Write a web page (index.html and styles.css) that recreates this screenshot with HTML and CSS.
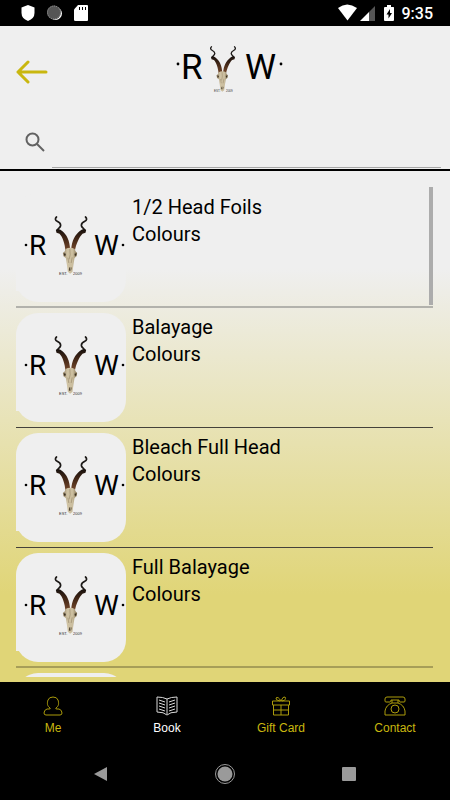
FILE: index.html
```html
<!DOCTYPE html>
<html lang="en">
<head>
<meta charset="utf-8">
<meta name="viewport" content="width=device-width, initial-scale=1">
<title>Book</title>
<link rel="stylesheet" href="styles.css">
</head>
<body>
<svg class="defs" aria-hidden="true">
  <defs>
    <linearGradient id="horn-shade" x1="0" y1="0" x2="0" y2="1">
      <stop offset="0" stop-color="#17110e"/>
      <stop offset="0.4" stop-color="#3e2415"/>
      <stop offset="1" stop-color="#75482a"/>
    </linearGradient>
    <linearGradient id="bone-shade" x1="0" y1="0" x2="1" y2="0">
      <stop offset="0" stop-color="#8d7c60"/>
      <stop offset="0.3" stop-color="#d0c3a4"/>
      <stop offset="0.7" stop-color="#cabd9e"/>
      <stop offset="1" stop-color="#80704f"/>
    </linearGradient>
    <symbol id="skull" viewBox="0 0 99 174">
      <g fill="none" stroke="#1c1917" stroke-width="5" stroke-linecap="round" stroke-linejoin="round">
        <path d="M6 3C1 7 2 13 8 16C14 19 20 23 18 30C17 35 11 36 9 42"/>
        <path d="M93 3C98 7 97 13 91 16C85 19 79 23 81 30C82 35 88 36 90 42"/>
      </g>
      <path fill="url(#horn-shade)" d="M4 42C8 37 16 39 23 45C37 56 45 73 47 101L33 104C31 83 25 63 15 53L6 50Z"/>
      <path fill="url(#horn-shade)" d="M95 42C91 37 83 39 76 45C62 56 52 73 50 101L61 104C65 83 74 63 84 53L93 50Z"/>
      <path fill="url(#bone-shade)" d="M33 99Q47 92 61 99L63 106L68 111L66 121L60 126L57 145L54 167L47 173L40 167L37 145L34 126L27 121L25 111L31 106Z"/>
      <path fill="#3b3022" d="M28 112L34 113L33 119L29 119ZM66 112L60 113L61 119L65 119ZM44 155L46 153V165L43 163ZM49 153L51 155L50 163L48 165Z"/>
      <path fill="none" stroke="#8b7a5c" stroke-width="1.5" d="M46 99L47 116L44 130M53 124L50 141M40 125L43 141"/>
    </symbol>
    <symbol id="tile-logo" viewBox="0 0 110 109">
      <rect width="110" height="109" rx="22" fill="#efefef"/>
      <rect y="70" width="8" height="28" fill="#efefef"/>
      <circle cx="10" cy="52" r="1.3"/>
      <text class="logo-letter" x="13" y="62" font-size="28">R</text>
      <use href="#skull" x="38" y="23" width="34" height="58"/>
      <text class="logo-letter" x="78" y="62" font-size="28">W</text>
      <circle cx="107" cy="52" r="1.3"/>
      <text class="logo-small" x="43" y="82" font-size="4">EST.</text>
      <text class="logo-small" x="57" y="82" font-size="4">2009</text>
    </symbol>
  </defs>
</svg>

<div class="app">
  <div class="status">
    <svg class="status-left" viewBox="0 0 70 26" aria-hidden="true">
      <path fill="#fff" d="M8 5L14.500 7.500V13Q14.500 18.500 8 21Q1.500 18.500 1.500 13V7.500Z"/>
      <circle cx="35.500" cy="13.500" r="6.500" fill="#fff"/>
      <circle cx="34" cy="12.500" r="7" fill="#555"/>
      <circle cx="34" cy="12.500" r="6.500" fill="none" stroke="#999" stroke-width="1" stroke-dasharray="1 1"/>
      <path fill="#fff" d="M58 5H67Q68 5 68 6V20Q68 21 67 21H55.500Q54 21 54 20V9.500Z"/>
      <path stroke="#000" stroke-width="1" d="M59.500 7V10M62.500 7V10M65.500 7V10"/>
    </svg>
    <svg class="status-right" viewBox="0 0 60 26" aria-hidden="true">
      <path fill="#fff" d="M0 8Q9 1 19 8L9.500 20.500Z"/>
      <path fill="#fff" d="M22 21L31 12V21Z"/>
      <path fill="#555" d="M31 12L37 6V21H31Z"/>
      <path fill="#fff" d="M49 5H53V7H55.500Q56 7 56 8V20Q56 21 55 21H47Q46 21 46 20V8Q46 7 47 7H49Z"/>
      <path fill="#000" d="M52 9L48.500 14.500H50.500V18.500L54 13H52Z"/>
    </svg>
    <span class="clock">9:35</span>
  </div>

  <header class="header">
    <div class="top">
      <button class="back" type="button" aria-label="Back">
        <svg viewBox="0 0 32 24" width="32" height="24" aria-hidden="true"><path fill="none" stroke="#c9b70f" stroke-width="3" stroke-linecap="round" stroke-linejoin="round" d="M12 2L2 12L12 22M2 12H30"/></svg>
      </button>
      <svg class="brand" viewBox="0 0 126 62" role="img" aria-label="R Y W">
        <circle cx="16" cy="26" r="1.4"/>
        <text class="logo-letter" x="19" y="41" font-size="35">R</text>
        <use href="#skull" x="47" y="8" width="28" height="46"/>
        <text class="logo-letter" x="83" y="41" font-size="35">W</text>
        <circle cx="119" cy="26" r="1.4"/>
        <text class="logo-small" x="52" y="54" font-size="3">EST.</text>
        <text class="logo-small" x="64" y="54" font-size="3">2009</text>
      </svg>
    </div>
    <label class="search">
      <svg viewBox="0 0 20 20" width="20" height="20" aria-hidden="true"><g fill="none" stroke="#626262" stroke-width="2"><circle cx="7.500" cy="7.500" r="6"/><path d="M12 12L19 19"/></g></svg>
      <input type="search" aria-label="Search services">
    </label>
  </header>

  <main class="content">
    <ul class="list">
      <li><svg class="tile" aria-hidden="true"><use href="#tile-logo"/></svg><div class="info"><div>1/2 Head Foils</div><div>Colours</div></div></li>
      <li><svg class="tile" aria-hidden="true"><use href="#tile-logo"/></svg><div class="info"><div>Balayage</div><div>Colours</div></div></li>
      <li><svg class="tile" aria-hidden="true"><use href="#tile-logo"/></svg><div class="info"><div>Bleach Full Head</div><div>Colours</div></div></li>
      <li><svg class="tile" aria-hidden="true"><use href="#tile-logo"/></svg><div class="info"><div>Full Balayage</div><div>Colours</div></div></li>
      <li><svg class="tile" aria-hidden="true"><use href="#tile-logo"/></svg></li>
    </ul>
    <div class="thumb"></div>
  </main>

  <nav class="tabs">
    <a href="#me">
      <svg viewBox="0 0 22 20" width="22" height="20" aria-hidden="true"><path d="M8 12C5 10 5 7 6 4Q7 1 11 1T16 4C17 7 17 10 14 12Q13 13 15 13H17Q20 14 20 17Q20 19 18 19H4Q2 19 2 17Q2 14 5 13H7Q9 13 8 12Z"/></svg>
      <span>Me</span>
    </a>
    <a href="#book" class="active">
      <svg viewBox="0 0 22 20" width="22" height="20" aria-hidden="true"><path d="M11 3Q7 1 1 1V16Q8 16 11 19Q14 16 21 16V1Q15 1 11 3V18M3 4L9 6M3 7L9 9M3 10L9 12M3 13L9 15M19 4L13 6M19 7L13 9M19 10L13 12M19 13L13 15"/></svg>
      <span>Book</span>
    </a>
    <a href="#gift">
      <svg viewBox="0 0 22 20" width="22" height="20" aria-hidden="true"><path d="M2.500 5H19.500V9H2.500ZM3.500 9V19H18.500V9M11 9V19M4 14H18M10 5Q5 4 6 2Q8 0 11 5Q13 0 15 1Q17 4 12 5"/></svg>
      <span>Gift Card</span>
    </a>
    <a href="#contact">
      <svg viewBox="0 0 22 20" width="22" height="20" aria-hidden="true"><path d="M3 1H19Q21 1 21 3V5Q21 6 20 6H16Q15 6 15 4H7Q7 6 6 6H2Q1 6 1 5V3Q1 1 3 1ZM8 4V7Q2 9 1 15V19H21V15Q20 9 14 7V4M8 7H14"/><circle cx="11" cy="13" r="4"/></svg>
      <span>Contact</span>
    </a>
  </nav>

  <div class="system">
    <button type="button" aria-label="System back"><svg viewBox="0 0 22 22" width="22" height="22" aria-hidden="true"><path fill="#9a9a9a" d="M4 11L17 4V18Z"/></svg></button>
    <button type="button" aria-label="Home"><svg viewBox="0 0 22 22" width="22" height="22" aria-hidden="true"><circle cx="11" cy="11" r="7.500" fill="#9a9a9a"/><circle cx="11" cy="11" r="9.500" fill="none" stroke="#9a9a9a"/></svg></button>
    <button type="button" aria-label="Recent apps"><svg viewBox="0 0 22 22" width="22" height="22" aria-hidden="true"><rect x="4" y="4" width="14" height="14" rx="1" fill="#9a9a9a"/></svg></button>
  </div>
</div>
</body>
</html>
```
FILE: styles.css
```css
* { box-sizing: border-box; }
body { margin: 0; font-family: Roboto, "Liberation Sans", sans-serif; color: #000; background: #000; }
button { margin: 0; padding: 0; border: 0; background: none; display: flex; }
svg { display: block; flex: none; }
.defs { position: absolute; width: 0; height: 0; }
.app { display: flex; flex-direction: column; height: 100vh; }

.status { display: flex; align-items: center; height: 26px; padding: 0 17px 0 20px; background: #000; color: #fff; }
.status-left { width: 70px; height: 26px; margin-right: auto; }
.status-right { width: 60px; height: 26px; margin-right: 4px; }
.clock { padding-top: 2px; font-size: 16px; font-weight: 500; line-height: 24px; }

.header { background: #efefef; border-bottom: 2px solid #000; }
.top { display: grid; grid-template-columns: 1fr auto 1fr; align-items: center; height: 92px; padding: 0 16px; }
.brand { width: 126px; height: 62px; margin-bottom: 6px; }
.logo-letter { font-family: Roboto, sans-serif; font-weight: 400; }
.logo-small { font-family: "Liberation Sans", sans-serif; fill: #333; }
.search { display: flex; gap: 7px; padding: 0 9px 1px 25px; }
.search svg { margin-top: 14px; }
.search input { flex: 1; min-width: 0; height: 50px; padding: 0; border: 0; border-bottom: 1px solid #a6a6a6; outline: 0; background: none; font: inherit; }

.content { position: relative; flex: 1; min-height: 0; padding: 17px 17px 5px 16px; background: linear-gradient(#efefef 19%, #e0d577 83%); }
.list { height: 100%; margin: 0; padding: 0; overflow: hidden; list-style: none; }
.list li { display: flex; gap: 6px; height: 120px; padding-top: 5px; border-bottom: 1px solid #44413a; }
.list li:first-child { border-bottom: 2px solid #b2b2ac; }
.list li:nth-child(4) { border-bottom: 2px solid #a79e58; }
.tile { width: 110px; height: 109px; }
.info { padding-top: 1px; font-size: 20px; line-height: 27px; }
.thumb { position: absolute; top: 16px; right: 17px; width: 4px; height: 118px; background: #acacac; }

.tabs { display: grid; grid-template-columns: repeat(4, 1fr); height: 66px; margin: 0 -2px 0 -4px; padding-top: 14px; }
.tabs a { display: flex; flex-direction: column; align-items: center; gap: 4px; color: #c9b70f; font: 12px/16px "Liberation Sans", sans-serif; text-decoration: none; }
.tabs svg { fill: none; stroke: currentColor; stroke-width: 1; opacity: 0.85; }
.tabs .active { color: #fff; }

.system { display: flex; justify-content: center; gap: 102px; height: 52px; padding-top: 15px; }
```
